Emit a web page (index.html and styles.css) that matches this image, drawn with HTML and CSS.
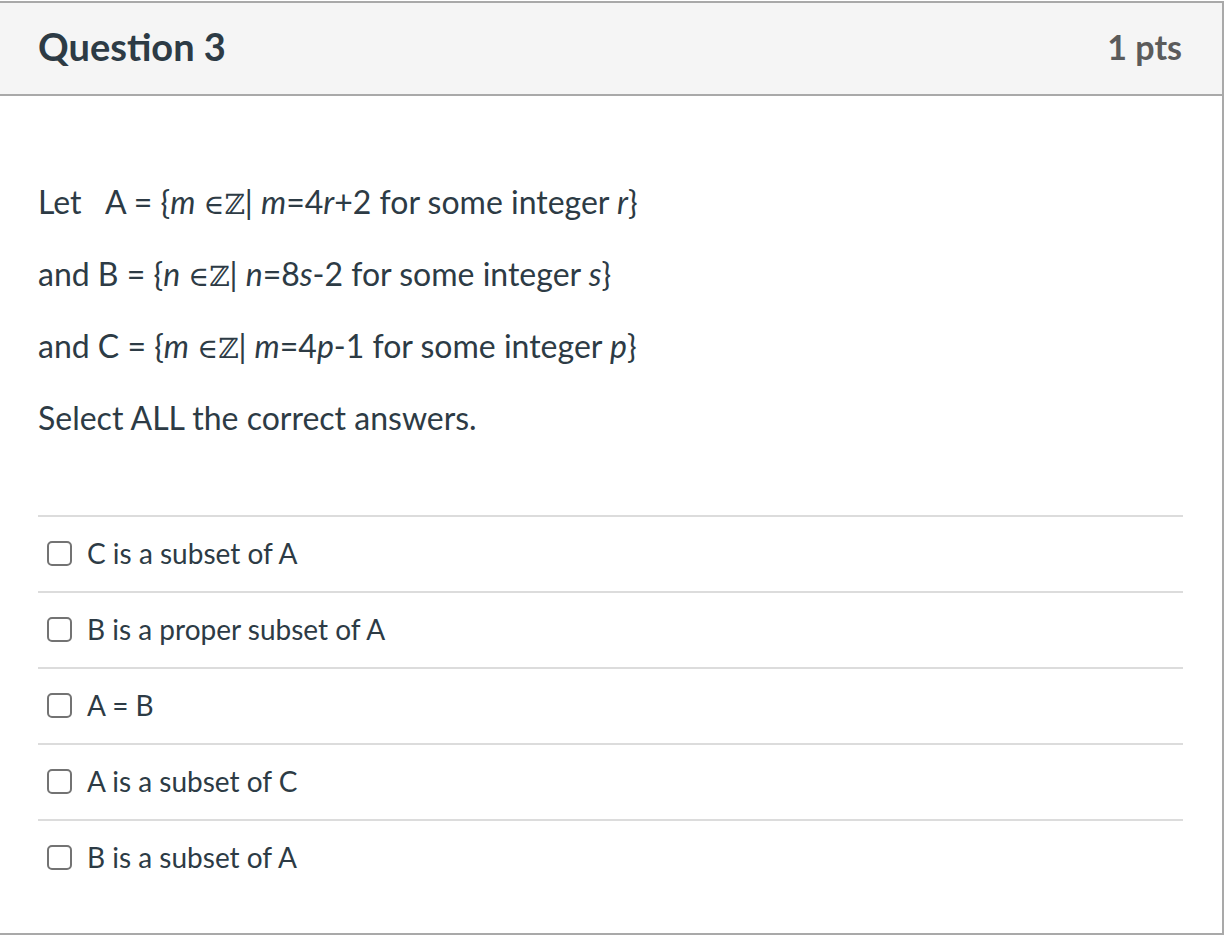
FILE: index.html
```html
<!DOCTYPE html>
<html lang="en">
<head>
  <meta charset="UTF-8" />
  <title>Question 3</title>
  <link rel="stylesheet" href="styles.css">
</head>
<body>
  <div class="question">
    <div class="question-header">
      <h2>Question 3</h2>
      <span class="points">1 pts</span>
    </div>

    <div class="question-body">
      <p>Let&nbsp;&nbsp; A = {<i>m</i> <span class="math">&isin;&#8484;</span>| <i>m</i>=4<i>r</i>+2 for some integer <i>r</i>}</p>
      <p>and B = {<i>n</i> <span class="math">&isin;&#8484;</span>| <i>n</i>=8<i>s</i>-2 for some integer <i>s</i>}</p>
      <p>and C = {<i>m</i> <span class="math">&isin;&#8484;</span>| <i>m</i>=4<i>p</i>-1 for some integer <i>p</i>}</p>
      <p>Select ALL the correct answers.</p>

      <div class="answers">
        <label class="answer"><input type="checkbox"><span class="box"></span>C is a subset of A</label>
        <label class="answer"><input type="checkbox"><span class="box"></span>B is a proper subset of A</label>
        <label class="answer"><input type="checkbox"><span class="box"></span>A = B</label>
        <label class="answer"><input type="checkbox"><span class="box"></span>A is a subset of C</label>
        <label class="answer"><input type="checkbox"><span class="box"></span>B is a subset of A</label>
      </div>
    </div>
  </div>
</body>
</html>
```

FILE: styles.css
```css
body {
  margin: 0;
  background-color: #ffffff;
  font-family: Lato, "Open Sans", sans-serif;
  color: #2d3b45;
}

.question {
  box-sizing: border-box;
  width: 1226px;
  margin: 1px 0 0 -2px;
  border: 2px solid #a9a9a9;
}

.question-header {
  display: flex;
  justify-content: space-between;
  align-items: center;
  height: 86px;
  padding: 0 40px 5px 38px;
  background-color: #f5f5f5;
  border-bottom: 2px solid #a9a9a9;
}

h2 {
  margin: 0;
  font-size: 38px;
  font-weight: bold;
}

.points {
  font-size: 34px;
  font-weight: bold;
  color: #5b5b5b;
}

.question-body {
  padding: 85px 39px 38px 38px;
}

p {
  margin: 0 0 30px;
  font-size: 32px;
  line-height: 42px;
}

.math {
  font-family: "DejaVu Serif", serif;
  font-size: 28px;
  line-height: 0;
}

.answers {
  margin-top: 76px;
}

.answer {
  display: flex;
  align-items: center;
  height: 72px;
  padding: 0 0 2px 9px;
  border-top: 2px solid #dcdcdc;
  font-size: 28px;
  cursor: pointer;
}

.answer input {
  display: none;
}

.box {
  box-sizing: border-box;
  width: 25px;
  height: 25px;
  margin-right: 15px;
  border: 2px solid #737373;
  border-radius: 5px;
}
```
